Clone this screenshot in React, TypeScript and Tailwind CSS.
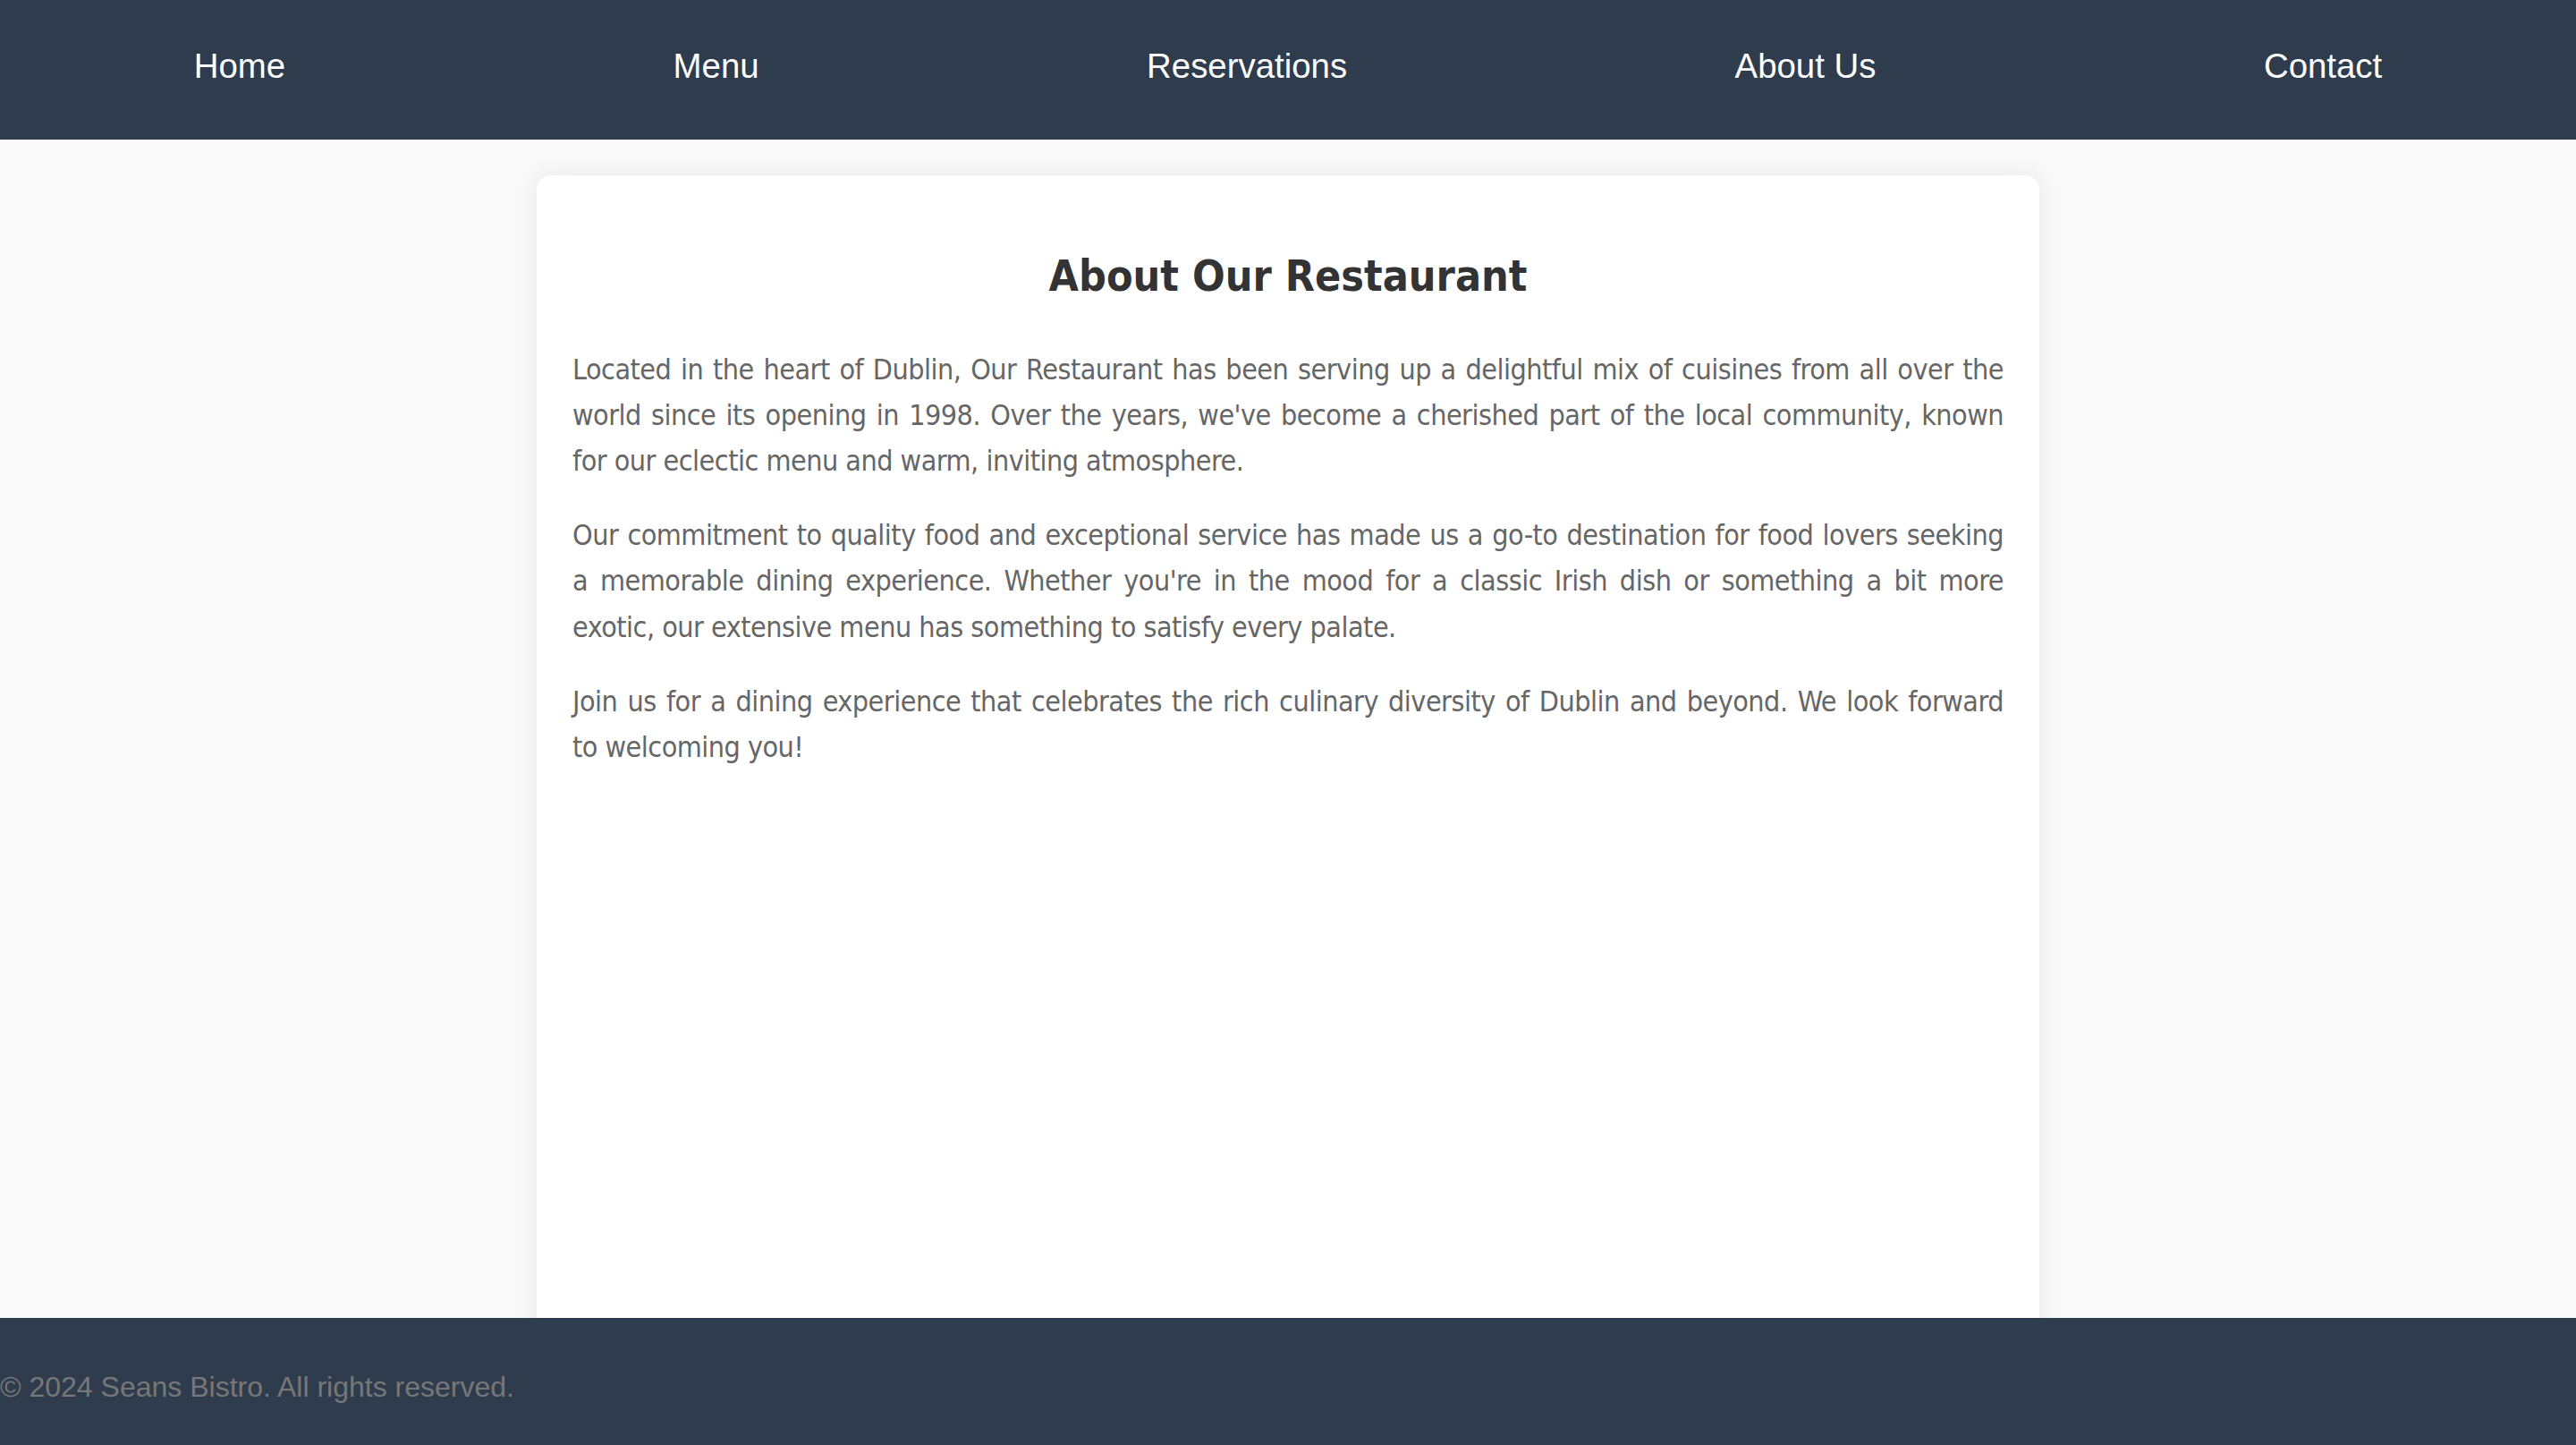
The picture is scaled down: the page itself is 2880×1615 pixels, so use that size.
import React from "react";

const links = ["Home", "Menu", "Reservations", "About Us", "Contact"];

// each paragraph kept on the same line breaks as the design
const paragraphs: string[][] = [
    [
        "Located in the heart of Dublin, Our Restaurant has been serving up a delightful mix of cuisines from all over the",
        "world since its opening in 1998. Over the years, we've become a cherished part of the local community, known",
        "for our eclectic menu and warm, inviting atmosphere.",
    ],
    [
        "Our commitment to quality food and exceptional service has made us a go-to destination for food lovers seeking",
        "a memorable dining experience. Whether you're in the mood for a classic Irish dish or something a bit more",
        "exotic, our extensive menu has something to satisfy every palate.",
    ],
    [
        "Join us for a dining experience that celebrates the rich culinary diversity of Dublin and beyond. We look forward",
        "to welcoming you!",
    ],
];

export default function App() {
    return (
        <div className="h-screen flex flex-col overflow-hidden bg-[#f9f9f9]">
            <nav className="h-[156px] shrink-0 bg-[#2f3c4e] flex items-center justify-around pb-[10px] font-['Liberation_Sans',Arial,sans-serif] text-[38.4px] text-white">
                {links.map((l) => (
                    <a key={l} href="#" className="leading-[43px]">
                        {l}
                    </a>
                ))}
            </nav>

            <main className="flex-1 overflow-hidden pt-[40px]">
                <div className="w-[1680px] mx-auto h-[calc(100%+40px)] bg-white rounded-[16px] shadow-[0_0_24px_rgba(0,0,0,0.08)] px-[40px] pt-[84px] font-['DejaVu_Sans_Condensed','DejaVu_Sans',sans-serif]">
                    <h2 className="text-center text-[48px] leading-[57.6px] font-bold text-[#333] mb-[50px]">
                        About Our Restaurant
                    </h2>
                    {paragraphs.map((lines, i) => (
                        <p key={i} className="text-[32px] leading-[51.2px] tracking-[-0.5px] text-[#666] mb-[32px]">
                            {lines.map((line, j) => (
                                <span
                                    key={j}
                                    className={
                                        j < lines.length - 1
                                            ? "block whitespace-nowrap text-justify [text-align-last:justify]"
                                            : "block whitespace-nowrap"
                                    }
                                >
                                    {line}
                                </span>
                            ))}
                        </p>
                    ))}
                </div>
            </main>

            <footer className="h-[142px] shrink-0 bg-[#2f3c4e] pt-[59px] font-['Liberation_Sans',Arial,sans-serif] text-[32px] leading-[37px] text-[#777]">
                <p>© 2024 Seans Bistro. All rights reserved.</p>
            </footer>
        </div>
    );
}
